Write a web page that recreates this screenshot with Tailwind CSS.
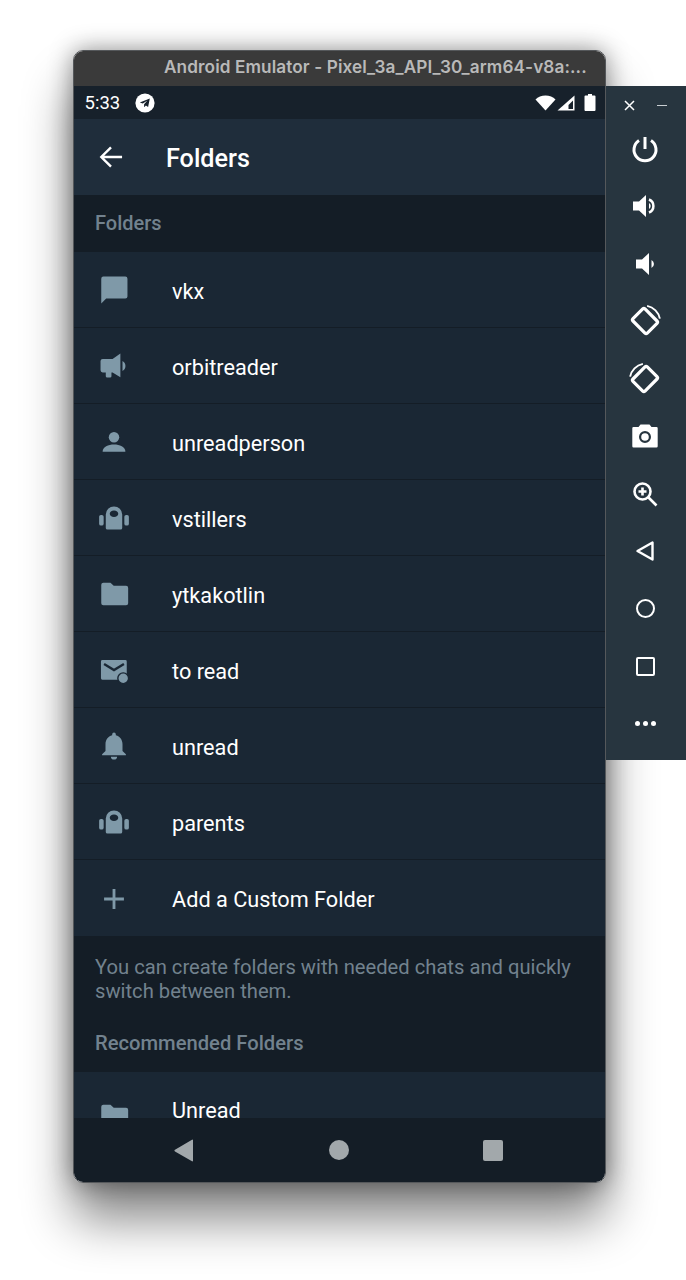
<!DOCTYPE html>
<html lang="en">
<head>
<meta charset="UTF-8">
<title>Android Emulator</title>
<script src="https://cdn.jsdelivr.net/npm/@tailwindcss/browser@4"></script>
</head>
<body class="bg-white font-['Roboto',sans-serif] overflow-hidden">
<div class="relative w-[686px] h-[1280px] bg-white overflow-hidden">

  <!-- emulator window -->
  <div class="absolute left-[73px] top-[50px] w-[533px] h-[1133px] flex flex-col rounded-[10px] overflow-hidden border border-[#55585b] shadow-[0_36px_50px_rgba(0,0,0,0.48),0_0_24px_rgba(0,0,0,0.42)]">
    <div class="h-[35px] shrink-0 bg-[#3a3a3a] flex items-center pl-[90px] pr-[10px] pb-[4px]">
      <span class="font-['Inter',sans-serif] font-semibold text-[17.2px] text-[#b9b9b9] whitespace-nowrap tracking-[0.1px]">Android Emulator - Pixel_3a_API_30_arm64-v8a:...</span>
    </div>

    <div class="h-[33px] shrink-0 bg-[#17212b] flex items-center pl-[11px] pr-[9px] text-white">
      <span class="text-[18.5px] leading-none pt-[2px] -ml-[0.5px]">5:33</span>
      <svg class="ml-[15px] w-[20px] h-[20px]" viewBox="0 0 20 20"><circle cx="10" cy="10" r="9.6" fill="#fff"/><path d="M14.8 5.400 4.800 9.400l3 1.200 4.600-3-3.300 3.700v3l1.800-1.900 2.200 1.600z" fill="#17212b"/></svg>
      <svg class="ml-auto w-[21px] h-[16px]" viewBox="0 0 21 16"><path d="M10.500 15.500 0.500 4.500C3 2 6.500 0.500 10.500 0.500s7.500 1.500 10 4z" fill="#fff"/></svg>
      <svg class="ml-[1px] w-[18px] h-[16px]" viewBox="0 0 18 16"><path d="M17.500 0.500V15.500H0.500z" fill="#fff"/><path d="M16 5.500 11.500 10v4H16z" fill="#17212b"/></svg>
      <svg class="ml-[9px] w-[12px] h-[17px]" viewBox="0 0 12 17"><path d="M4 0h4v1.500h2.500a1 1 0 0 1 1 1V16a1 1 0 0 1-1 1h-9a1 1 0 0 1-1-1V2.500a1 1 0 0 1 1-1H4z" fill="#fff"/></svg>
    </div>

    <div class="h-[76px] shrink-0 bg-[#1f2d3b] flex items-center text-white">
      <svg class="ml-[25px] w-[24px] h-[24px]" viewBox="0 0 26 26" fill="none" stroke="#fff" stroke-width="2.600"><path d="M25 13H3M13 2.500 2.500 13 13 23.500"/></svg>
      <span class="ml-[43px] text-[25.2px] font-medium leading-none pt-[3px]">Folders</span>
    </div>

    <div class="flex-1 min-h-0 overflow-hidden flex flex-col bg-[#141d26]">
      <div class="h-[57px] shrink-0 flex items-center pl-[21px] pb-[2px] text-[20px] font-medium text-[#72828e]">Folders</div>

      <div class="h-[76px] shrink-0 bg-[#1a2734] border-b border-[#141d26] flex items-center text-white text-[21.7px]">
        <span class="w-[98px] pl-[23px] pt-[1px]"><svg class="w-[34px] h-[34px]" viewBox="0 0 24 24" fill="#7f99a8"><path d="M20 2.500H4.500a1.500 1.500 0 0 0-1.500 1.500v17.500l3.500-3.500H20a1.500 1.500 0 0 0 1.500-1.500V4A1.500 1.500 0 0 0 20 2.500z"/></svg></span>
        <span class="pt-[5px]">vkx</span>
      </div>
      <div class="h-[76px] shrink-0 bg-[#1a2734] border-b border-[#141d26] flex items-center text-white text-[21.7px]">
        <span class="w-[98px] pl-[23px] pt-[1px]"><svg class="w-[34px] h-[34px]" viewBox="0 0 24 24" fill="#7f99a8"><path d="M2.500 8.500A1.500 1.500 0 0 1 4 7h7l5.500-3.800V20L11 16.500H10.200v2.700a1 1 0 0 1-1 1H7.200a1 1 0 0 1-1-1v-2.700H4a1.500 1.500 0 0 1-1.500-1.500z"/><path d="M18 8.500a4 4 0 0 1 0 7z"/></svg></span>
        <span class="pt-[5px]">orbitreader</span>
      </div>
      <div class="h-[76px] shrink-0 bg-[#1a2734] border-b border-[#141d26] flex items-center text-white text-[21.7px]">
        <span class="w-[98px] pl-[23px] pt-[1px]"><svg class="w-[34px] h-[34px]" viewBox="0 0 24 24" fill="#7f99a8"><circle cx="12" cy="8.700" r="3.700"/><path d="M4 18.500c0-3 4-4.800 8-4.800s8 1.800 8 4.800v.3H4z"/></svg></span>
        <span class="pt-[5px]">unreadperson</span>
      </div>
      <div class="h-[76px] shrink-0 bg-[#1a2734] border-b border-[#141d26] flex items-center text-white text-[21.7px]">
        <span class="w-[98px] pl-[23px] pt-[1px]"><svg class="w-[34px] h-[34px]" viewBox="0 0 24 24" fill="#7f99a8"><path fill-rule="evenodd" d="M12 3.800a5.800 5.800 0 0 1 5.800 5.800V19a1.200 1.200 0 0 1-1.200 1.200H7.400A1.200 1.200 0 0 1 6.200 19V9.600A5.800 5.800 0 0 1 12 3.800zM12 6.700c-1.800 0-3 1-3 2.300s1.200 2.300 3 2.300 3-1 3-2.300-1.200-2.300-3-2.300z"/><rect x="1.500" y="9.800" width="3.200" height="7.500" rx="1.300"/><rect x="19.300" y="9.800" width="3.200" height="7.500" rx="1.300"/></svg></span>
        <span class="pt-[5px]">vstillers</span>
      </div>
      <div class="h-[76px] shrink-0 bg-[#1a2734] border-b border-[#141d26] flex items-center text-white text-[21.7px]">
        <span class="w-[98px] pl-[23px] pt-[1px]"><svg class="w-[34px] h-[34px]" viewBox="0 0 24 24" fill="#7f99a8"><path d="M3 5.500A1.500 1.500 0 0 1 4.500 4h5l2.300 2.200h8.700A1.500 1.500 0 0 1 22 7.700v10.800a1.500 1.500 0 0 1-1.500 1.500H4.500A1.500 1.500 0 0 1 3 18.500z"/></svg></span>
        <span class="pt-[5px]">ytkakotlin</span>
      </div>
      <div class="h-[76px] shrink-0 bg-[#1a2734] border-b border-[#141d26] flex items-center text-white text-[21.7px]">
        <span class="w-[98px] pl-[23px] pt-[1px]"><svg class="w-[34px] h-[34px]" viewBox="0 0 24 24"><path fill="#7f99a8" d="M3.800 5H20a1 1 0 0 1 1 1v11.800a1 1 0 0 1-1 1H3.800a1 1 0 0 1-1-1V6a1 1 0 0 1 1-1z"/><path fill="none" stroke="#1a2734" stroke-width="1.700" d="M5 7.800 12 12l7-4.200"/><circle cx="18.500" cy="17.800" r="3.800" fill="#7f99a8" stroke="#1a2734" stroke-width="1"/></svg></span>
        <span class="pt-[5px]">to read</span>
      </div>
      <div class="h-[76px] shrink-0 bg-[#1a2734] border-b border-[#141d26] flex items-center text-white text-[21.7px]">
        <span class="w-[98px] pl-[23px] pt-[1px]"><svg class="w-[34px] h-[34px]" viewBox="0 0 24 24" fill="#7f99a8"><path d="M12 2.500a1.300 1.300 0 0 1 1.300 1.300v.6c3 .7 4.700 3.300 4.700 6.300v4.800l2.400 2.300v.7H3.600v-.7L6 15.500v-4.800c0-3 1.700-5.600 4.700-6.300v-.6A1.300 1.300 0 0 1 12 2.500z"/><path d="M9.800 19.500h4.400a2.200 2 0 0 1-4.400 0z"/></svg></span>
        <span class="pt-[5px]">unread</span>
      </div>
      <div class="h-[76px] shrink-0 bg-[#1a2734] border-b border-[#141d26] flex items-center text-white text-[21.7px]">
        <span class="w-[98px] pl-[23px] pt-[1px]"><svg class="w-[34px] h-[34px]" viewBox="0 0 24 24" fill="#7f99a8"><path fill-rule="evenodd" d="M12 3.800a5.800 5.800 0 0 1 5.800 5.800V19a1.200 1.200 0 0 1-1.200 1.200H7.400A1.200 1.200 0 0 1 6.200 19V9.600A5.800 5.800 0 0 1 12 3.800zM12 6.700c-1.800 0-3 1-3 2.300s1.200 2.300 3 2.300 3-1 3-2.300-1.200-2.300-3-2.300z"/><rect x="1.500" y="9.800" width="3.200" height="7.500" rx="1.300"/><rect x="19.300" y="9.800" width="3.200" height="7.500" rx="1.300"/></svg></span>
        <span class="pt-[5px]">parents</span>
      </div>
      <div class="h-[76px] shrink-0 bg-[#1a2734] flex items-center text-white text-[21.7px]">
        <span class="w-[98px] pl-[23px] pt-[1px]"><svg class="w-[34px] h-[34px]" viewBox="0 0 24 24" fill="#7f99a8"><path d="M11 5h2v6h6v2h-6v6h-2v-6H5v-2h6z"/></svg></span>
        <span class="pt-[5px]">Add a Custom Folder</span>
      </div>

      <div class="pt-[19px] pl-[21px] pr-[20px] text-[20.2px] leading-[24px] text-[#72828e]">
        <p>You can create folders with needed chats and quickly switch between them.</p>
        <p class="mt-[28px] font-medium">Recommended Folders</p>
      </div>

      <div class="mt-[17px] flex-1 min-h-0 overflow-hidden bg-[#1a2734] text-white text-[21.7px]">
        <div class="h-[76px] flex items-center">
          <span class="w-[98px] pl-[23px] pt-[11px]"><svg class="w-[34px] h-[34px]" viewBox="0 0 24 24" fill="#7f99a8"><path d="M3 5.500A1.500 1.500 0 0 1 4.500 4h5l2.300 2.200h8.700A1.500 1.500 0 0 1 22 7.700v10.800a1.500 1.500 0 0 1-1.500 1.500H4.500A1.500 1.500 0 0 1 3 18.500z"/></svg></span>
          <span class="pt-[2px]">Unread</span>
        </div>
      </div>
    </div>

    <div class="h-[64px] shrink-0 bg-[#141d26] flex items-start justify-between pl-[100px] pr-[102px] pt-[21px]">
      <svg class="w-[20px] h-[23px]" viewBox="0 0 20 23"><path d="M19 1v21a.8.8 0 0 1-1 .3L1 12.500a1 1 0 0 1 0-1.800L18 .8a.7.7 0 0 1 1 .2z" fill="#a2a8ab"/></svg>
      <span class="mt-[1px] w-[20px] h-[20px] rounded-full bg-[#a2a8ab]"></span>
      <span class="mt-[1px] w-[20px] h-[21px] rounded-[2px] bg-[#a2a8ab]"></span>
    </div>
  </div>

  <!-- emulator side toolbar -->
  <div class="absolute left-[606px] top-[86px] w-[80px] h-[674px] bg-[#27353f] text-white flex flex-col items-center pr-[2px]">
    <div class="h-[34px] w-full shrink-0 flex items-center justify-center gap-[22px] pt-[5px] pl-[1px]">
      <svg class="w-[11px] h-[11px]" viewBox="0 0 11 11" stroke="#fff" stroke-width="1.500"><path d="M1 1l9 9M10 1l-9 9"/></svg>
      <span class="w-[10px] h-[1.500px] bg-[#c9cfd3]"></span>
    </div>
    <div class="h-[57.500px] w-full flex items-center justify-center"><svg class="w-[28px] h-[28px]" viewBox="0 0 28 28" fill="none" stroke="#fff" stroke-width="3"><path d="M14 2v12"/><path d="M8 5.500a11 11 0 1 0 12 0"/></svg></div>
    <div class="h-[57.500px] w-full flex items-center justify-center"><svg class="w-[28px] h-[28px]" viewBox="0 0 28 28"><path d="M2 9.500h6l7-6.500v22l-7-6.500H2z" fill="#fff"/><path d="M18 7.500a7 7 0 0 1 0 13" fill="none" stroke="#fff" stroke-width="2.500"/><path d="M18 11a3.500 3.500 0 0 1 0 6z" fill="#fff"/></svg></div>
    <div class="h-[57.500px] w-full flex items-center justify-center"><svg class="w-[28px] h-[28px]" viewBox="0 0 28 28"><path d="M5 9.500h6l7-6.500v22l-7-6.500H5z" fill="#fff"/><path d="M20.500 10a4.500 4.500 0 0 1 0 8z" fill="#fff"/></svg></div>
    <div class="h-[57.500px] w-full flex items-center justify-center"><svg class="w-[34px] h-[34px]" viewBox="0 0 32 32" fill="none" stroke="#fff"><rect x="6.500" y="8" width="19" height="16" rx="1.500" stroke-width="3" transform="rotate(45 16 16)"/><path d="M18 1.800a15 15 0 0 1 12 12" stroke-width="1.800"/></svg></div>
    <div class="h-[57.500px] w-full flex items-center justify-center"><svg class="w-[34px] h-[34px]" viewBox="0 0 32 32" fill="none" stroke="#fff"><rect x="6.500" y="8" width="19" height="16" rx="1.500" stroke-width="3" transform="rotate(-45 16 16)"/><path d="M14 1.800a15 15 0 0 0-12 12" stroke-width="1.800"/></svg></div>
    <div class="h-[57.500px] w-full flex items-center justify-center"><svg class="w-[28px] h-[28px]" viewBox="0 0 28 28"><path fill="#fff" fill-rule="evenodd" d="M9.500 2.500h9l2 2.500h5a1.200 1.200 0 0 1 1.200 1.200v18a1.200 1.200 0 0 1-1.200 1.200H2.500a1.200 1.200 0 0 1-1.200-1.200v-18A1.200 1.200 0 0 1 2.500 5h5zM14 9a6 6 0 1 0 0 12 6 6 0 0 0 0-12zm0 2.200a3.800 3.800 0 1 1 0 7.600 3.800 3.800 0 0 1 0-7.600z"/></svg></div>
    <div class="h-[57.500px] w-full flex items-center justify-center"><svg class="w-[26px] h-[26px]" viewBox="0 0 26 26" fill="none" stroke="#fff" stroke-width="2.600"><circle cx="10.500" cy="10.500" r="8"/><path d="M16.500 16.500 24.500 24.500M10.500 6.500v8M6.500 10.500h8"/></svg></div>
    <div class="h-[57.500px] w-full flex items-center justify-center"><svg class="w-[22px] h-[22px]" viewBox="0 0 22 22" fill="none" stroke="#fff" stroke-width="2.400"><path d="M18.500 2.500v17L3.500 11z" stroke-linejoin="round"/></svg></div>
    <div class="h-[57.500px] w-full flex items-center justify-center"><span class="w-[19px] h-[19px] rounded-full border-2 border-white"></span></div>
    <div class="h-[57.500px] w-full flex items-center justify-center"><span class="w-[19px] h-[19px] rounded-[2px] border-2 border-white"></span></div>
    <div class="h-[57.500px] w-full flex items-center justify-center gap-[3px]"><span class="w-[5px] h-[5px] rounded-full bg-white"></span><span class="w-[5px] h-[5px] rounded-full bg-white"></span><span class="w-[5px] h-[5px] rounded-full bg-white"></span></div>
  </div>
</div>
</body>
</html>
